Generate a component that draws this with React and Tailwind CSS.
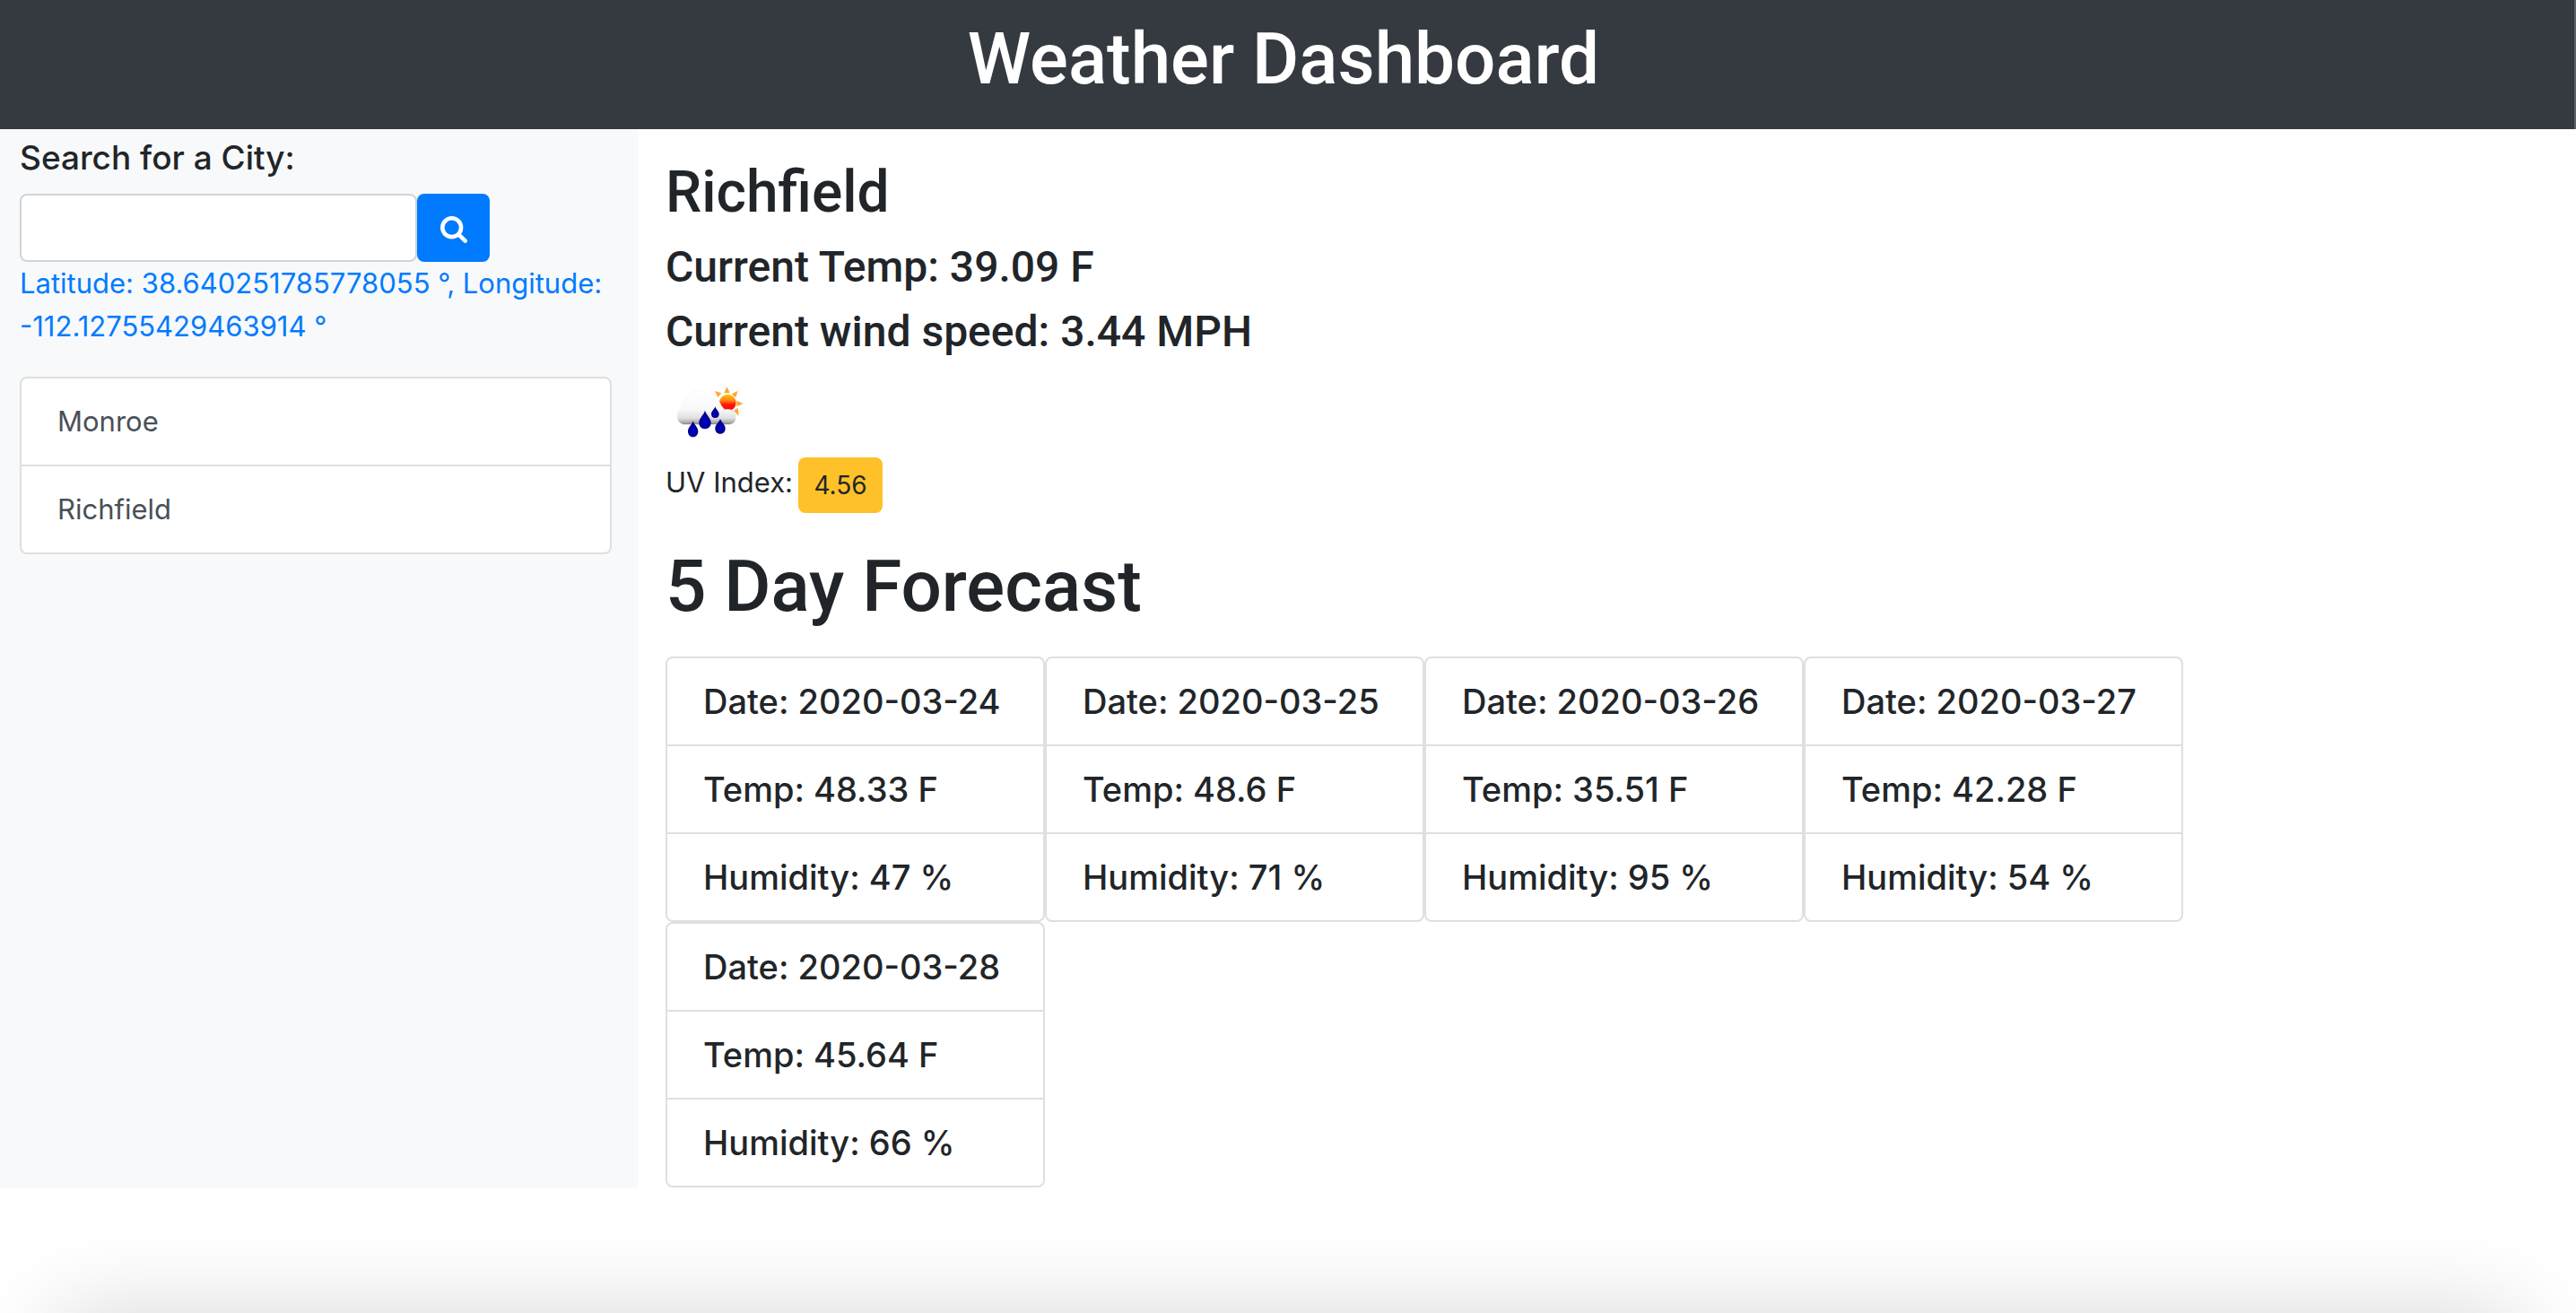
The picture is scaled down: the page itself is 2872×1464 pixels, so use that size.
const cities = ["Monroe", "Richfield"];

const forecast = [
  { date: "2020-03-24", temp: "48.33", humidity: 47 },
  { date: "2020-03-25", temp: "48.6", humidity: 71 },
  { date: "2020-03-26", temp: "35.51", humidity: 95 },
  { date: "2020-03-27", temp: "42.28", humidity: 54 },
  { date: "2020-03-28", temp: "45.64", humidity: 66 },
];

function SearchIcon() {
  return (
    <svg viewBox="0 128 1664 1664" className="size-[30px] fill-white" aria-hidden="true">
      <path d="M1152 832q0-185-131.5-316.5t-316.5-131.5-316.5 131.5-131.5 316.5 131.5 316.5 316.5 131.5 316.5-131.5 131.5-316.5zm512 832q0 52-38 90t-90 38q-54 0-90-38l-343-342q-179 124-399 124-143 0-273.5-55.5t-225-150-150-225-55.5-273.5 55.5-273.5 150-225 225-150 273.5-55.5 273.5 55.5 225 150 150 225 55.5 273.5q0 220-124 399l343 343q37 37 37 90z" />
    </svg>
  );
}

function RainIcon() {
  return (
    <svg viewBox="6 -24 300 300" className="size-[100px]" role="img" aria-label="Rain with sun">
      <defs>
        <linearGradient id="sun" x1="0" y1="0" x2="0" y2="1">
          <stop offset="0" stopColor="#ffc400" />
          <stop offset="0.35" stopColor="#ff8a1a" />
          <stop offset="0.6" stopColor="#ff1a0a" />
          <stop offset="1" stopColor="#ff0000" />
        </linearGradient>
        <linearGradient id="cloud" gradientUnits="userSpaceOnUse" x1="0" y1="54" x2="0" y2="167">
          <stop offset="0" stopColor="#ffffff" />
          <stop offset="0.55" stopColor="#f8f8f8" />
          <stop offset="0.8" stopColor="#e0e0e0" />
          <stop offset="0.92" stopColor="#b0b0b0" />
          <stop offset="1" stopColor="#707070" />
        </linearGradient>
        <radialGradient id="drop" cx="0.5" cy="0.62" r="0.5">
          <stop offset="0" stopColor="#0000d8" />
          <stop offset="1" stopColor="#00007c" />
        </radialGradient>
        <filter id="soft">
          <feGaussianBlur stdDeviation="1.6" />
        </filter>
      </defs>
      <g filter="url(#soft)">
        <g fill="#ffa733">
          <path d="M211 39l10 22h-19z" />
          <path d="M171 54l22 7-12 14z" />
          <path d="M248 53l-7 23-14-12z" />
          <path d="M266 96l-22 10v-20z" />
          <path d="M251 137l-17-17 14-10z" />
        </g>
        <circle cx="214" cy="93" r="28" fill="url(#sun)" />
        <path
          d="M72 166c-18 0-27-12-27-29 0-13 8-23 16-28 2-32 24-55 51-55 20 0 34 10 42 27 18-5 33 5 39 23 4 4 8 9 12 12 22-4 37 7 37 25 0 16-10 25-26 25z"
          fill="url(#cloud)"
          stroke="#f0f0f0"
          strokeWidth="1.5"
        />
        <g fill="url(#drop)">
          <path d="M98 154c4 14 17 21 17 35 0 11-7 19-17 19s-17-8-17-19c0-14 13-21 17-35z" />
          <path d="M138 119c5 16 20 26 20 41 0 12-8 21-20 21s-20-9-20-21c0-15 15-25 20-41z" />
          <path d="M172 106c3 10 13 16 13 25 0 8-5 13-13 13s-13-5-13-13c0-9 10-15 13-25z" />
          <path d="M189 147c4 12 17 20 17 32 0 11-7 18-17 18s-17-7-17-18c0-12 13-20 17-32z" />
        </g>
      </g>
    </svg>
  );
}

function ForecastCard({ day }) {
  return (
    <li className="w-[423px]">
      <dl className="divide-y-2 divide-[#dfdfdf] rounded-lg border-2 border-[#dfdfdf] bg-white">
        {[
          ["Date", day.date],
          ["Temp", `${day.temp} F`],
          ["Humidity", `${day.humidity} %`],
        ].map(([name, value]) => (
          <div
            key={name}
            className="px-10 py-6 text-[38px] leading-[48px] font-medium whitespace-nowrap"
          >
            <dt className="inline">{name}: </dt>
            <dd className="inline">{value}</dd>
          </div>
        ))}
      </dl>
    </li>
  );
}

export default function App() {
  return (
    <div className="relative min-h-screen bg-white font-['Inter',sans-serif] text-[31px] leading-[48px] text-[#212529]">
      <header className="border-r-2 border-[#5c6063] bg-[#343a40] pt-[18px] pr-2 pb-[30px]">
        <h1 className="text-center font-['Roboto',sans-serif] text-[80px] leading-[96px] font-medium text-white">
          Weather Dashboard
        </h1>
      </header>

      <div className="flex pr-6">
        <aside className="w-1/4 bg-[#f8f9fa] pt-2 pr-[30px] pl-[22px]">
          <form onSubmit={(e) => e.preventDefault()}>
            <label htmlFor="city" className="block text-[37px] leading-[48px] font-medium">
              Search for a City:
            </label>
            <div className="mt-4 flex">
              <input
                id="city"
                type="text"
                className="h-[76px] w-[443px] rounded-lg border-2 border-[#ced4da] bg-white px-6"
              />
              <button
                type="submit"
                aria-label="Search"
                className="flex h-[76px] w-[81px] items-center justify-center rounded-lg bg-[#007bff] pt-1"
              >
                <SearchIcon />
              </button>
            </div>
          </form>
          <a href="#location" className="block text-[#007bff]">
            Latitude: 38.640251785778055 °, Longitude: -112.12755429463914 °
          </a>
          <ul className="mt-8 divide-y-2 divide-[#dfdfdf] rounded-lg border-2 border-[#dfdfdf] bg-white">
            {cities.map((city) => (
              <li key={city}>
                <button type="button" className="block w-full px-10 py-6 text-left text-[#495057]">
                  {city}
                </button>
              </li>
            ))}
          </ul>
        </aside>

        <main className="flex-1 px-[30px] pt-8">
          <h2 className="font-['Roboto',sans-serif] text-[64px] leading-[78px] font-medium">
            Richfield
          </h2>
          <p className="mt-4 font-['Roboto',sans-serif] text-[48px] leading-[56px] font-medium">
            Current Temp: 39.09 F
          </p>
          <p className="mt-4 font-['Roboto',sans-serif] text-[48px] leading-[56px] font-medium">
            Current wind speed: 3.44 MPH
          </p>
          <div className="mt-3">
            <RainIcon />
          </div>
          <div className="flex items-start gap-1.5">
            <span className="pt-1">UV Index:</span>
            <button
              type="button"
              className="h-[62px] w-[94px] rounded-lg bg-[#ffc129] text-[28px] text-[#212529]"
            >
              4.56
            </button>
          </div>
          <h2 className="pt-[34px] font-['Roboto',sans-serif] text-[80px] leading-[96px] font-medium">
            5 Day Forecast
          </h2>
          <ul className="mt-[30px] flex flex-wrap">
            {forecast.map((day) => (
              <ForecastCard key={day.date} day={day} />
            ))}
          </ul>
        </main>
      </div>

      <div className="pointer-events-none absolute inset-x-0 bottom-0 h-32 overflow-hidden">
        <div className="mx-16 mt-32 h-32 shadow-[0_0_100px_rgba(0,0,0,0.16)]" />
      </div>
    </div>
  );
}
